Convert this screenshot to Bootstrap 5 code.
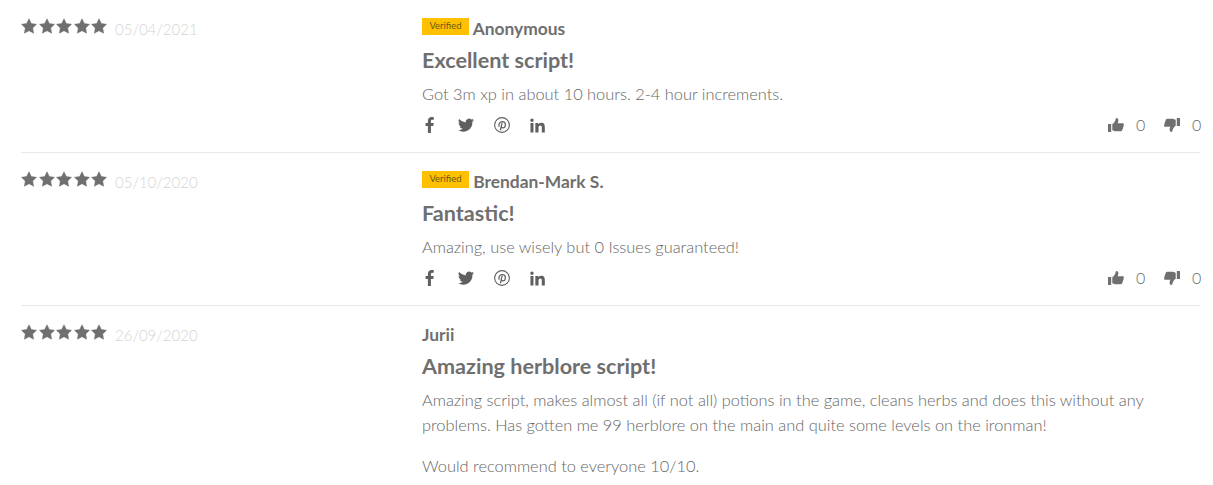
<!DOCTYPE html>
<html lang="en">
<head>
  <meta charset="UTF-8">
  <title>Reviews</title>
  <link href="https://cdn.jsdelivr.net/npm/bootstrap@5.3.3/dist/css/bootstrap.min.css" rel="stylesheet">
  <script src="https://cdn.jsdelivr.net/npm/bootstrap@5.3.3/dist/js/bootstrap.bundle.min.js"></script>
  <style>
    body { font-family: "Lato", "Liberation Sans", sans-serif; color: #6f6f6f; background: #fff; overflow: hidden; }
    .review-list { padding: 0 13px 0 21px; }
    .review-item { border-bottom: 1px solid #e9e9e9; height: 153px; padding-top: 16px; }
    .review-item:last-child { border-bottom: 0; height: auto; }
    .review-side { width: 401px; flex: none; }
    .review-stars { display: flex; gap: 1.5px; color: #6f6f6f; margin-top: 2px; }
    .review-date { color: #d4d4d4; font-size: 15px; font-weight: 300; margin-left: 8px; line-height: 24px; margin-top: 1px; }
    .review-main { padding-top: 1px; }
    .verified-tag { background: #ffc000; color: #6b5a10; font-size: 9.5px; width: 47px; height: 17px; line-height: 16px; text-align: center; display: inline-block; font-weight: 400; vertical-align: 6px; }
    .review-author { font-size: 17.4px; font-weight: 700; line-height: 24px; color: #6f6f6f; }
    .review-title { font-size: 21.6px; font-weight: 700; line-height: 28px; color: #6f6f6f; margin: 5px 0 7px; }
    .review-body { font-size: 16.4px; font-weight: 300; line-height: 25px; color: #666; margin-bottom: 16px; }
    .review-foot { height: 24px; margin-top: -9px; }
    .share-row { color: #5f5f5f; gap: 20px; }
    .vote-count { font-size: 16px; font-weight: 300; margin-left: 12px; width: 8px; color: #666; }
    .vote-down { margin-left: 20px; }
  </style>
</head>
<body>
  <svg width="0" height="0" class="position-absolute">
    <symbol id="i-star" viewBox="0 0 16 16"><path fill="currentColor" stroke="currentColor" stroke-width=".5" stroke-linejoin="round" d="M8 .8l2.300 4.800 5.200.7-3.800 3.700.9 5.200L8 12.700l-4.600 2.500.9-5.200L.5 6.300l5.200-.7z"/></symbol>
    <symbol id="i-fb" viewBox="0 0 16 16"><path fill="currentColor" d="M5.900 16V9H3.600V6.100h2.300V4c0-2.600 1.500-4 3.900-4 .9 0 1.800.1 2 .2v2.600h-1.400c-1.200 0-1.500.6-1.500 1.400v1.900h2.800L11.300 9H8.900v7z"/></symbol>
    <symbol id="i-tw" viewBox="0 0 16 16"><path fill="currentColor" d="M16 3c-.6.3-1.200.4-1.900.5.7-.4 1.200-1 1.400-1.800-.6.4-1.300.7-2.100.8A3.300 3.300 0 0 0 7.800 5.500 9.300 9.300 0 0 1 1.100 2.100a3.300 3.300 0 0 0 1 4.400c-.5 0-1-.2-1.500-.4 0 1.600 1.100 3 2.600 3.300-.5.100-1 .1-1.500 0 .4 1.300 1.600 2.200 3.100 2.300A6.600 6.600 0 0 1 0 13.100 9.300 9.300 0 0 0 14.400 4.800C15 4.300 15.600 3.700 16 3z"/></symbol>
    <symbol id="i-pin" viewBox="0 0 16 16"><circle cx="8" cy="8" r="7.400" fill="none" stroke="currentColor" stroke-width="1.100"/><path fill="none" stroke="currentColor" stroke-width="1.200" stroke-linecap="round" d="M5.100 9.300C4.300 7 5.800 4.600 8.300 4.600c2 0 3.100 1.300 3.100 2.900 0 1.900-1.100 3.300-2.500 3.300-.8 0-1.400-.5-1.500-1.200M8 6.200 6.500 12.800"/></symbol>
    <symbol id="i-in" viewBox="0 0 16 16"><path fill="currentColor" d="M.5 5.300h3.200V15.500H.5zM2.100.5a1.800 1.800 0 1 1 0 3.700 1.800 1.800 0 0 1 0-3.700zM5.700 5.300h3v1.400c.5-.9 1.600-1.700 3.200-1.700 3.300 0 3.900 2.200 3.900 5v5.500h-3.200v-4.900c0-1.200 0-2.700-1.600-2.700s-1.900 1.300-1.900 2.600v5H5.700z"/></symbol>
    <symbol id="i-up" viewBox="0 0 16 16"><path fill="currentColor" d="M0 7h3.200v8H0zM4.300 7.200c1.300-1 2.700-2.500 3.100-4 .2-.9.200-2.200 1.200-2.200 1.200 0 1.800 1.300 1.800 2.500 0 1-.5 1.900-.8 2.700h4.900c.9 0 1.500.7 1.500 1.400 0 .5-.3.900-.6 1.200.3.800.1 1.400-.5 1.900.2.800 0 1.400-.6 1.800.1 1-.6 1.700-1.700 1.700H8.500c-1.600 0-3-.6-4.200-1z"/></symbol>
    <symbol id="i-down" viewBox="0 0 16 16"><path fill="currentColor" d="M16 9h-3.200V1H16zM11.700 8.800c-1.300 1-2.700 2.500-3.100 4-.2.900-.2 2.200-1.200 2.200-1.200 0-1.800-1.300-1.800-2.500 0-1 .5-1.900.8-2.700H1.500C.6 9.800 0 9.100 0 8.400c0-.5.3-.9.600-1.200-.3-.8-.1-1.400.5-1.900-.2-.8 0-1.400.6-1.800-.1-1 .6-1.700 1.700-1.700h4.100c1.600 0 3 .6 4.200 1z"/></symbol>
  </svg>

  <div class="review-list">
    <!-- review 1 -->
    <div class="review-item d-flex">
      <div class="review-side d-flex align-items-start">
        <div class="review-stars">
          <svg width="16" height="16"><use href="#i-star"/></svg><svg width="16" height="16"><use href="#i-star"/></svg><svg width="16" height="16"><use href="#i-star"/></svg><svg width="16" height="16"><use href="#i-star"/></svg><svg width="16" height="16"><use href="#i-star"/></svg>
        </div>
        <span class="review-date">05/04/2021</span>
      </div>
      <div class="review-main flex-grow-1">
        <div class="review-author"><span class="verified-tag">Verified</span> Anonymous</div>
        <div class="review-title">Excellent script!</div>
        <p class="review-body">Got 3m xp in about 10 hours. 2-4 hour increments.</p>
        <div class="review-foot d-flex align-items-center justify-content-between">
          <div class="d-flex align-items-center share-row">
            <svg width="16" height="16"><use href="#i-fb"/></svg><svg width="16" height="16"><use href="#i-tw"/></svg><svg width="16" height="16"><use href="#i-pin"/></svg><svg width="15" height="15"><use href="#i-in"/></svg>
          </div>
          <div class="d-flex align-items-center">
            <svg width="16" height="16"><use href="#i-up"/></svg><span class="vote-count">0</span>
            <svg class="vote-down" width="16" height="16"><use href="#i-down"/></svg><span class="vote-count">0</span>
          </div>
        </div>
      </div>
    </div>
    <!-- review 2 -->
    <div class="review-item d-flex">
      <div class="review-side d-flex align-items-start">
        <div class="review-stars">
          <svg width="16" height="16"><use href="#i-star"/></svg><svg width="16" height="16"><use href="#i-star"/></svg><svg width="16" height="16"><use href="#i-star"/></svg><svg width="16" height="16"><use href="#i-star"/></svg><svg width="16" height="16"><use href="#i-star"/></svg>
        </div>
        <span class="review-date">05/10/2020</span>
      </div>
      <div class="review-main flex-grow-1">
        <div class="review-author"><span class="verified-tag">Verified</span> Brendan-Mark S.</div>
        <div class="review-title">Fantastic!</div>
        <p class="review-body">Amazing, use wisely but 0 Issues guaranteed!</p>
        <div class="review-foot d-flex align-items-center justify-content-between">
          <div class="d-flex align-items-center share-row">
            <svg width="16" height="16"><use href="#i-fb"/></svg><svg width="16" height="16"><use href="#i-tw"/></svg><svg width="16" height="16"><use href="#i-pin"/></svg><svg width="15" height="15"><use href="#i-in"/></svg>
          </div>
          <div class="d-flex align-items-center">
            <svg width="16" height="16"><use href="#i-up"/></svg><span class="vote-count">0</span>
            <svg class="vote-down" width="16" height="16"><use href="#i-down"/></svg><span class="vote-count">0</span>
          </div>
        </div>
      </div>
    </div>
    <!-- review 3 -->
    <div class="review-item d-flex">
      <div class="review-side d-flex align-items-start">
        <div class="review-stars">
          <svg width="16" height="16"><use href="#i-star"/></svg><svg width="16" height="16"><use href="#i-star"/></svg><svg width="16" height="16"><use href="#i-star"/></svg><svg width="16" height="16"><use href="#i-star"/></svg><svg width="16" height="16"><use href="#i-star"/></svg>
        </div>
        <span class="review-date">26/09/2020</span>
      </div>
      <div class="review-main flex-grow-1">
        <div class="review-author">Jurii</div>
        <div class="review-title">Amazing herblore script!</div>
        <p class="review-body">Amazing script, makes almost all (if not all) potions in the game, cleans herbs and does this without any problems. Has gotten me 99 herblore on the main and quite some levels on the ironman!</p>
        <p class="review-body">Would recommend to everyone 10/10.</p>
      </div>
    </div>
  </div>
</body>
</html>
